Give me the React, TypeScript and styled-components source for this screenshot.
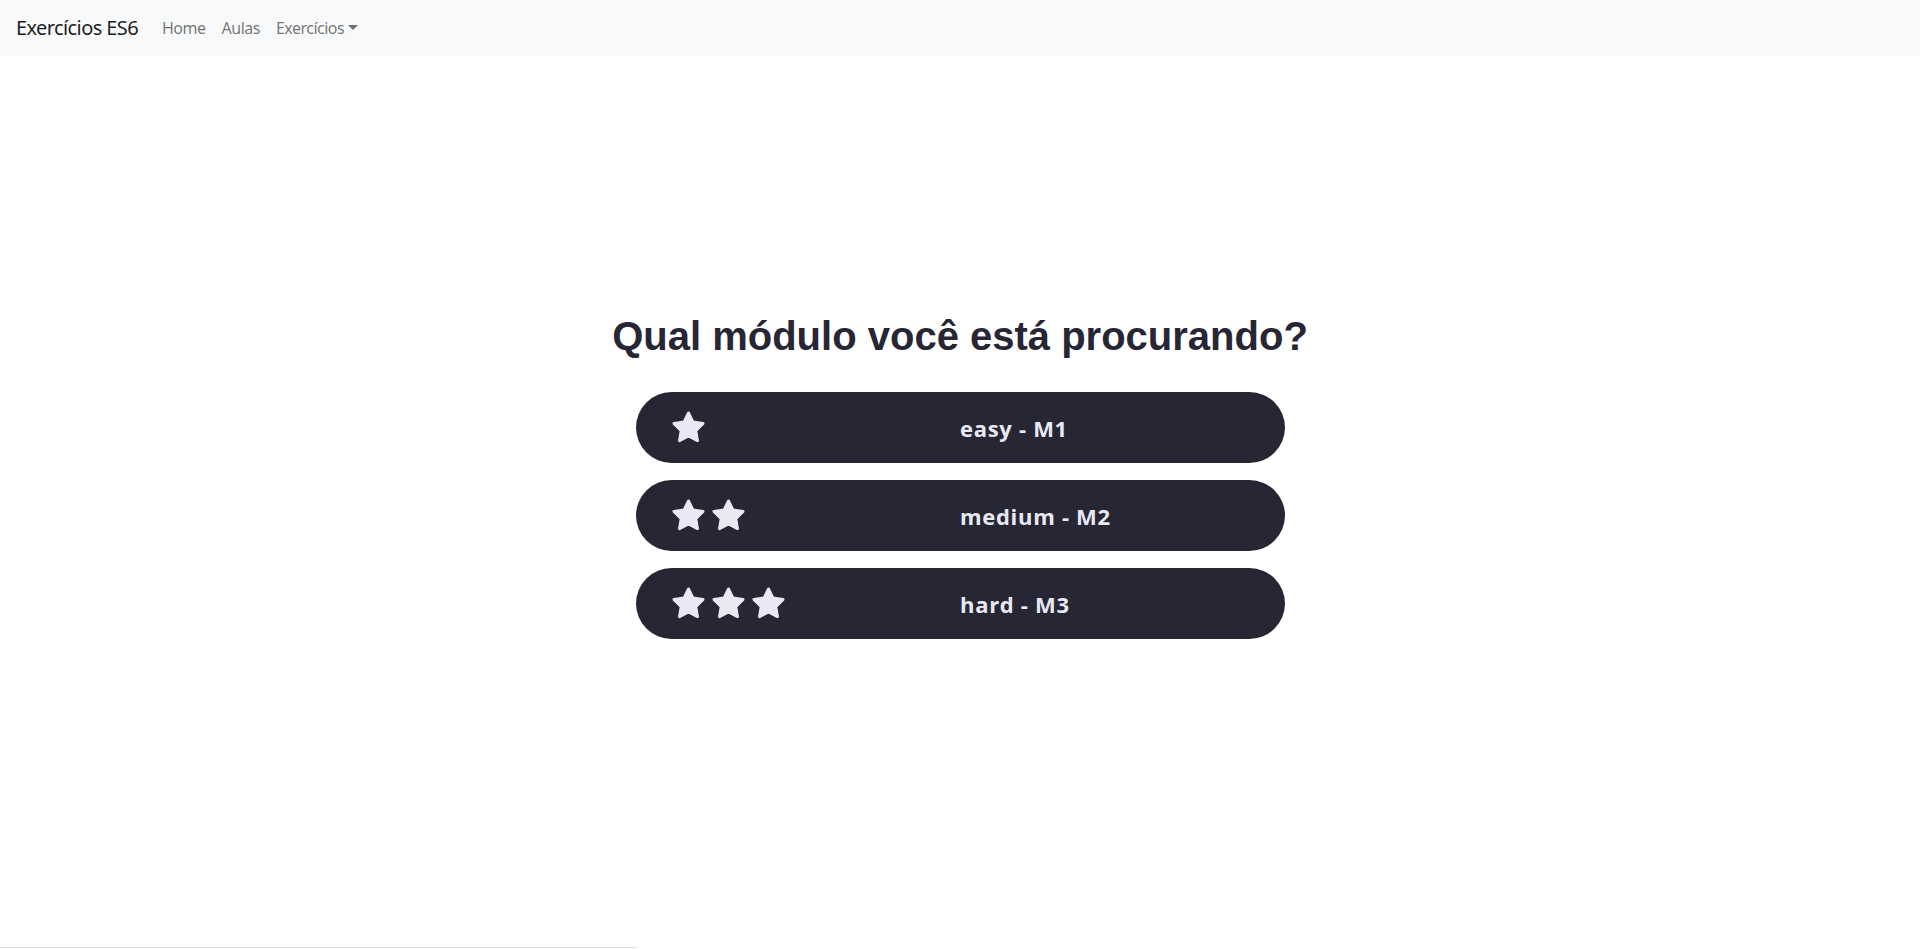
import React from "react";
import styled, { createGlobalStyle } from "styled-components";

const GlobalStyle = createGlobalStyle`
  *, *::before, *::after { box-sizing: border-box; }
  body {
    margin: 0;
    background: #ffffff;
    font-family: "Noto Sans", "Open Sans", sans-serif;
    color: #212529;
  }
`;

const Page = styled.div`
  min-height: 100vh;
  display: flex;
  flex-direction: column;
`;

const Navbar = styled.nav`
  display: flex;
  align-items: center;
  height: 56px;
  padding: 8px 16px;
  background: #f8f9fa;
`;

const Brand = styled.a`
  font-size: 20px;
  line-height: 30px;
  color: rgba(0, 0, 0, 0.9);
  margin-right: 16px;
  text-decoration: none;
  white-space: nowrap;
  letter-spacing: -0.6px;
`;

const NavLinks = styled.div`
  display: flex;
  align-items: center;
`;

const NavLink = styled.a<{ $dropdown?: boolean }>`
  font-size: 16px;
  line-height: 24px;
  padding: 8px 8px;
  color: rgba(0, 0, 0, 0.55);
  text-decoration: none;
  letter-spacing: -0.5px;
  ${(p) =>
    p.$dropdown &&
    `
    &::after {
      content: "";
      display: inline-block;
      margin-left: 4px;
      vertical-align: 4px;
      border-top: 5px solid rgba(0,0,0,0.55);
      border-right: 5px solid transparent;
      border-left: 5px solid transparent;
      border-bottom: 0;
    }
  `}
`;

const Main = styled.main`
  flex: 1;
  display: flex;
  flex-direction: column;
  align-items: center;
  padding-top: 256px;
`;

const Title = styled.h1`
  margin: 0 0 32px;
  font-family: "Liberation Sans", Arial, sans-serif;
  font-weight: 700;
  font-size: 40px;
  line-height: 48px;
  color: #272635;
`;

const ModuleList = styled.div`
  display: flex;
  flex-direction: column;
  gap: 17px;
`;

const ModuleButton = styled.button`
  width: 649px;
  height: 71px;
  border: none;
  border-radius: 36px;
  background: #272635;
  color: #e8e9f3;
  display: grid;
  grid-template-columns: 1fr 1fr;
  align-items: center;
  padding: 0;
  cursor: pointer;
`;

const Stars = styled.div`
  display: flex;
  align-items: center;
  gap: 5px;
  padding-left: 35px;
`;

const Label = styled.span`
  text-align: left;
  font-family: "Open Sans", "Noto Sans", sans-serif;
  font-weight: 700;
  font-size: 22px;
  line-height: 30px;
  padding-top: 1px;
  letter-spacing: 0.7px;
`;

const BottomRule = styled.div`
  width: 637px;
  height: 1px;
  background: #dedede;
  margin-bottom: 1px;
`;

const Star = () => (
  <svg width="35" height="35" viewBox="0 0 24 24" aria-hidden="true">
    <polygon
      points="12,2 15.09,8.26 22,9.27 17,14.14 18.18,21.02 12,17.77 5.82,21.02 7,14.14 2,9.27 8.91,8.26"
      fill="#e8e9f3"
      stroke="#e8e9f3"
      strokeWidth="2"
      strokeLinejoin="round"
    />
  </svg>
);

const modules = [
  { stars: 1, label: "easy - M1" },
  { stars: 2, label: "medium - M2" },
  { stars: 3, label: "hard - M3" },
];

export default function App() {
  return (
    <>
      <GlobalStyle />
      <Page>
        <Navbar>
          <Brand href="#">Exercícios ES6</Brand>
          <NavLinks>
            <NavLink href="#">Home</NavLink>
            <NavLink href="#">Aulas</NavLink>
            <NavLink href="#" $dropdown>
              Exercícios
            </NavLink>
          </NavLinks>
        </Navbar>
        <Main>
          <Title>Qual módulo você está procurando?</Title>
          <ModuleList>
            {modules.map((m) => (
              <ModuleButton key={m.label}>
                <Stars>
                  {Array.from({ length: m.stars }).map((_, i) => (
                    <Star key={i} />
                  ))}
                </Stars>
                <Label>{m.label}</Label>
              </ModuleButton>
            ))}
          </ModuleList>
        </Main>
        <BottomRule />
      </Page>
    </>
  );
}
